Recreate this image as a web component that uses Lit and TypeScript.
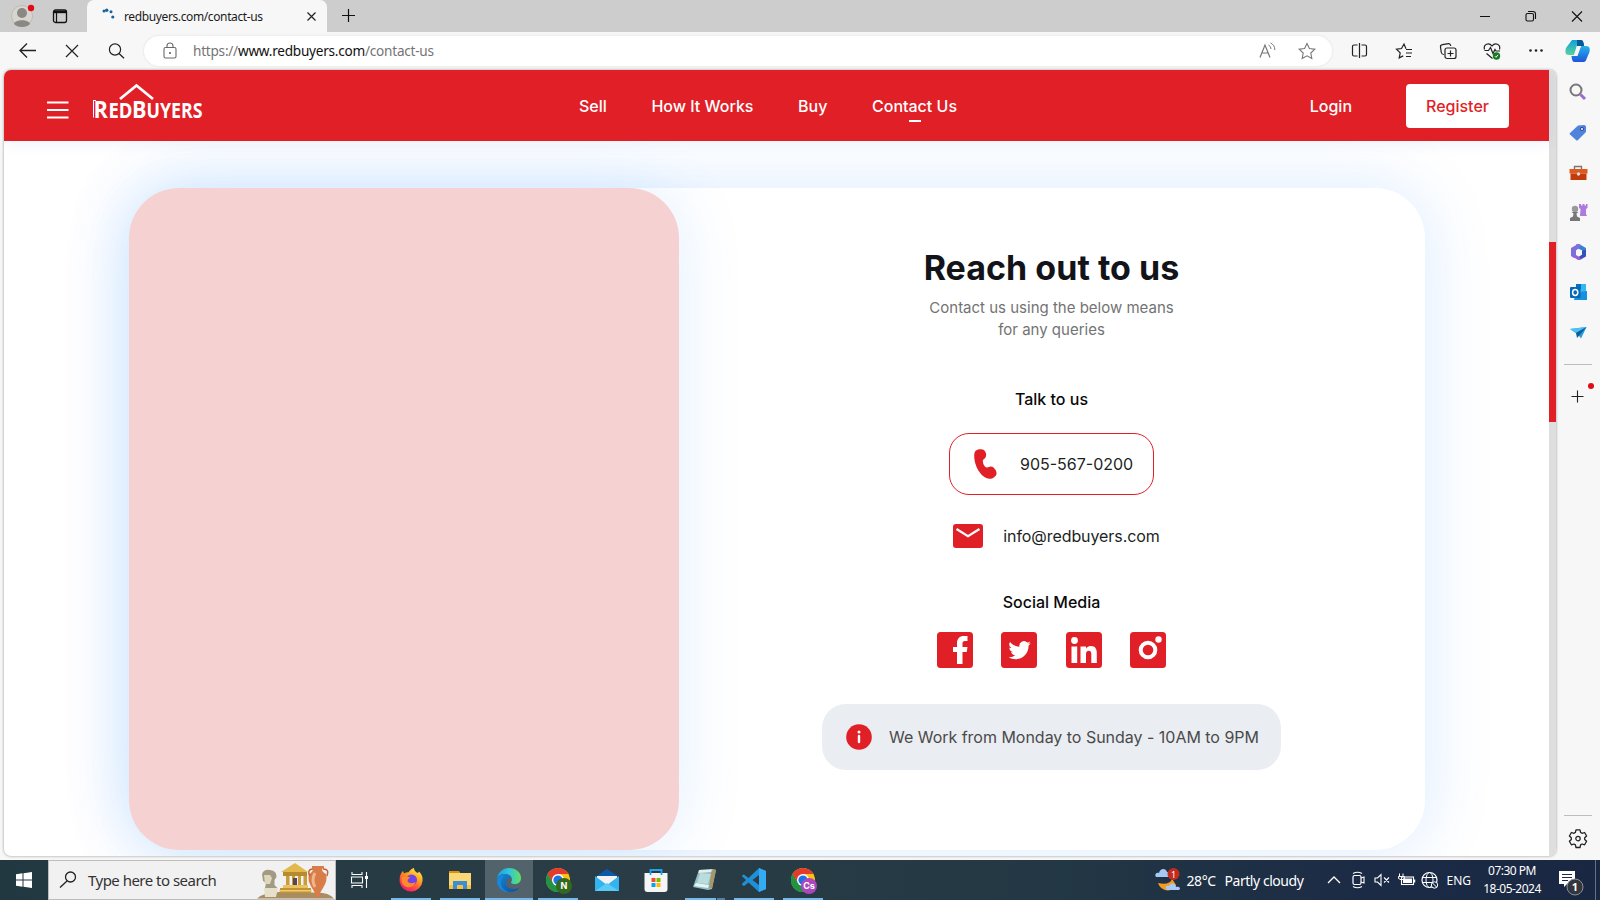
import { LitElement, html, css, svg } from "lit";
import { customElement } from "lit/decorators.js";

const icon = (w: number, h: number, body: unknown) =>
  html`<svg width=${w} height=${h} viewBox="0 0 ${w} ${h}" fill="none">${body}</svg>`;

const magnifier = svg`<circle cx="9" cy="8.500" r="5.600" stroke="#222" stroke-width="1.200"/><path d="M13 12.500l5 4.700" stroke="#222" stroke-width="1.300"/>`;
const chrome = (id: string, color: string) => svg`
  <circle cx="14" cy="14" r="12" fill="#fbc116"/>
  <path d="M14 14L3.6 8A12 12 0 0 1 24.4 8L14 8z" fill="#e33b2e"/>
  <path d="M3.6 8A12 12 0 0 0 14 26L19 17 9 17z" fill="#229342"/>
  <path d="M3.6 8L9 17 14 8z" fill="#e33b2e"/>
  <path d="M3.6 8A12 12 0 0 0 14 26l5.2-9H14L8.8 17z" fill="#229342"/>
  <circle cx="14" cy="14" r="6" fill="#fff"/><circle cx="14" cy="14" r="4.6" fill="#1a73e8"/>
  <circle cx="20" cy="20" r="8" fill=${color}/>
  <text x="20" y="23.2" font-size="9" font-weight="700" fill="#fff" text-anchor="middle" font-family="Inter, sans-serif">${id}</text>`;

const taskIcons: { body: unknown; state: string }[] = [
  { state: "open", body: svg`
    <defs><linearGradient id="ff" x1=".8" y1="0" x2=".2" y2="1"><stop offset="0" stop-color="#fff044"/><stop offset=".4" stop-color="#ff9a1f"/><stop offset=".75" stop-color="#ff3b4e"/><stop offset="1" stop-color="#e0188a"/></linearGradient></defs>
    <path d="M3 10c1-2 1.500-4 3-5l1 2.500c1.500-1 3-1.300 4.500-1.200C13 4 15 2.500 17 2c0 2.500 1.500 4 4 5l1-1.500c3 3 4 6 3.500 9.500A11.500 11.500 0 0 1 2.700 16c-.3-2 0-4 .3-6z" fill="url(#ff)"/>
    <circle cx="14.500" cy="14" r="5.500" fill="#7542e5"/><path d="M5 11c3-1.500 6-1 8.500 1-2 .2-3 1.500-3 3 1 2.500 5 3 8 1-1 4-5 6-9 5-4-1.300-6-6-4.500-10z" fill="#ff8a26"/>` },
  { state: "open", body: svg`
    <path d="M3 5h10l2 3H3z" fill="#d9930d"/><path d="M3 7h22v16H3z" fill="#fbd775"/><path d="M3 19h22v4H3z" fill="#f5c044"/>
    <path d="M7 23v-8h14v8h-4v-4h-6v4z" fill="#3b90d4"/>` },
  { state: "active", body: svg`
    <defs><linearGradient id="ed" x1="0" y1=".3" x2="1" y2=".3"><stop offset="0" stop-color="#1aa0e0"/><stop offset=".5" stop-color="#31c6dc"/><stop offset="1" stop-color="#65e05c"/></linearGradient><linearGradient id="ed2" x1="0" y1="0" x2="1" y2="1"><stop offset="0" stop-color="#1587d8"/><stop offset="1" stop-color="#0c4fa0"/></linearGradient></defs>
    <path d="M2 13C3 6 8 2 14 2c7 0 12 4.500 12 10 0 4-3 6-6 6-2.500 0-4-.8-4-1.600 0-.5 1-1 1-2.600C17 10.500 13.500 8 10 8c-4 0-7 2-8 5z" fill="url(#ed)"/>
    <path d="M2 13c1-3.500 4.500-5 8-5 3 0 5.500 1.500 6.500 3.500C14 11 11 13 11 17c0 4 4 6 8 6 2 0 4-.6 5.500-1.500C22 25 18.500 26 15 26 7 26 1.500 20 2 13z" fill="url(#ed2)"/>
    <path d="M10 9c-3 2-4.500 5-4 9 .6 4 4 7 8 8-7 .5-12-5-12-11 1-4 4-6 8-6z" fill="#1688d8"/>` },
  { state: "open", body: chrome("N", "#33691e") },
  { state: "", body: svg`<path d="M2 11L14 3l12 8v6H2z" fill="#0c59a8"/><path d="M4 10h20v8H4z" fill="#f3f3f3"/><path d="M2 10l12 9 12-9v15H2z" fill="#33b4ee"/><path d="M2 25l12-8 12 8z" fill="#5acbf7"/>` },
  { state: "", body: svg`<path d="M2.500 7h23v16a3 3 0 0 1-3 3h-17a3 3 0 0 1-3-3z" fill="#f5f5f5"/><path d="M8.500 9V4h11v5" stroke="#1fa5e8" stroke-width="1.800"/><path d="M9.500 12h4v4h-4z" fill="#f25022"/><path d="M14.500 12h4v4h-4z" fill="#7fba00"/><path d="M9.500 17h4v4h-4z" fill="#00a4ef"/><path d="M14.500 17h4v4h-4z" fill="#ffb900"/>` },
  { state: "open multi", body: svg`<path d="M8 4l13-1 4 1-4 19-4 1-15-3z" fill="#8fbfc4"/><path d="M8 4l13-.6L20 6 7.500 7z" fill="#e8eee9"/><path d="M20 7l2.500-4L25 4l-4 18-3 .5z" fill="#aa9568"/><path d="M3 20l14 2 1-3-13-2z" fill="#e6f3f2"/><path d="M9 7l11 1-3 10-11-1z" fill="#b9dcdc"/>` },
  { state: "open", body: svg`<path d="M19 2l7 3v18l-7 3L8.500 16.500 4 20l-2-1.300v-1L6 14 2 10.300V9.200L4 8.500l4.500 3.500z" fill="#1f8fd6"/><path d="M19 9v10l-6.500-5z" fill="#2a3c45"/><path d="M19 2l7 3v18l-7 3z" fill="#35a9f2"/>` },
  { state: "open", body: chrome("Cs", "#ab47bc") },
];

const sideIcons = [
  svg`<circle cx="8" cy="8" r="5.500" stroke="#767676" stroke-width="2"/><path d="M12.500 12.500l4.500 4.500" stroke="#9a6bd1" stroke-width="3"/>`,
  svg`<path d="M2 11l8-7.500 6-.5c1 0 2 .8 2 2v5l-8 8c-.7.7-1.300.7-2 0l-6-5.500c-.6-.5-.6-1 0-1.500z" fill="#5083dc"/><circle cx="14" cy="7" r="1.600" fill="#dce8ff" stroke="#254a93"/>`,
  svg`<path d="M6.500 7V4.500h7V7" stroke="#777" stroke-width="1.400"/><path d="M1.500 7h18v4.500h-18z" fill="#e2571e"/><path d="M2.500 11.500h16V18h-16z" fill="#c33b0c"/><circle cx="10.500" cy="12" r="1.700" fill="#ddd"/>`,
  svg`<path d="M11 2h2v1.500h1.500V2h2v1.500H18V2h1.500v4l-1.500 1v5l1 2h-7l.5-7-1.500-1z" fill="#ae7ae0"/><circle cx="7" cy="7" r="3.200" fill="#999"/><path d="M3.500 10h7l-2 1.500.5 3 3 1.500v3H2v-3l3-1.500.5-3z" fill="#777"/>`,
  svg`<path d="M8 2.500L11 2l7 4v8l-3 2V9L8 6z" fill="#3b7fd8"/><path d="M10 2L3 6v8l3 2 2-1V9l3-3 2-3z" fill="#7f6fdc"/><path d="M3 13.500l7 4.500h2l6-3.500V12l-4 1-3 1.500L8 13v2z" fill="#9a5fd6"/><path d="M14 8.500l4-.5v6l-5 3-2-2.500 3-2z" fill="#3452b8"/><path d="M8 8.500l2.500-1.700L14 8.500v4l-3 2-3-2z" fill="#f7f7f7"/>`,
  svg`<path d="M8 2h10v9H8z" fill="#35b8f1"/><path d="M8 2h5v5H8z" fill="#0a6fc0"/><path d="M8 10.500L19 9v9H6z" fill="#1490df"/><rect x="2" y="5" width="10.500" height="11" rx="1" fill="#0668b8"/><ellipse cx="7.200" cy="10.500" rx="2.600" ry="2.900" stroke="#fff" stroke-width="1.500"/>`,
  svg`<path d="M2 7l16.500-2L13 16.500l-3-4z" fill="#1f9fe0"/><path d="M2 7l16.500-2L8 11z" fill="#4ac0f5"/><path d="M8 11l10.500-6L9 16z" fill="#125b97"/>`,
];

@customElement("app-root")
export class AppRoot extends LitElement {
  static styles = css`
    :host { display: flex; flex-direction: column; width: 1600px; height: 900px; overflow: hidden; background: #f7f7f7; font-family: "Noto Sans", "Open Sans", sans-serif; color: #1b1b1b; }
    * { box-sizing: border-box; }
    svg { display: block; flex: none; overflow: visible; }
    .tabs { height: 32px; flex: none; background: #cdcdcd; display: flex; align-items: center; }
    .avatar { margin-left: 11px; }
    .workspaces { margin-left: 16px; }
    .tab { width: 240px; height: 32px; margin-left: 19px; background: #f7f7f7; border-radius: 7px 7px 0 0; display: flex; align-items: center; padding-left: 15px; font-size: 12px; }
    .tab .name { width: 191px; flex: none; padding-left: 8px; white-space: nowrap; letter-spacing: -.38px; }
    .plus { margin-left: 14px; }
    .window { margin-left: auto; display: flex; gap: 26px; padding-right: 13px; }
    .toolbar { height: 38px; flex: none; display: flex; align-items: center; }
    .nav { display: flex; gap: 24px; padding-left: 18px; width: 144px; }
    .address { width: 1188px; height: 30px; background: #fff; border-radius: 15px; box-shadow: 0 0 3px #0000001a; display: flex; align-items: center; padding: 0 15px 0 17px; }
    .url { margin-left: 14px; flex: 1; font-size: 13.6px; color: #757575; letter-spacing: -.24px; white-space: nowrap; padding-bottom: 1px; }
    .url b { color: #111; font-weight: 400; }
    .address .last { margin-left: 20px; }
    .tools { display: flex; gap: 24.2px; padding-left: 17.5px; align-items: center; }
    .copilot { margin-left: 19px; }
    .body { height: 790px; flex: none; display: flex; padding-left: 4px; }
    .page { width: 1552px; height: 786px; display: flex; border-radius: 7px; overflow: hidden; background: #fff; box-shadow: 0 0 3px #0006; }
    .site { width: 1545px; display: flex; flex-direction: column; font-family: Inter, sans-serif; }
    .scroll { width: 7px; background: #dedede; padding-top: 172px; }
    .thumb { height: 180px; background: #e11f27; }
    .header { height: 71px; flex: none; background: #e11f27; color: #fff; display: grid; grid-template-columns: 575px 1fr auto; align-items: center; padding-right: 40px; font-size: 16px; font-weight: 500; z-index: 2; box-shadow: 0 2px 14px #0a50a014; }
    .brand { display: flex; align-items: center; padding-left: 43px; gap: 24px; }
    .burger { padding-top: 9px; }
    .logo { font-family: "Open Sans", "Noto Sans", sans-serif; font-weight: 700; margin-bottom: 11px; }
    .menu { display: flex; gap: 44.600px; }
    .current::after { content: ""; display: block; width: 12px; height: 2px; background: #fff; margin: 4px auto -6px; }
    .auth { display: flex; align-items: center; gap: 54px; }
    .register { width: 103px; height: 44px; border-radius: 4px; background: #fff; color: #e11f27; display: grid; place-items: center; }
    .main { flex: 1; padding: 47px 0 0 125px; }
    .card { width: 1296px; height: 662px; border-radius: 50px; background: #fff; box-shadow: 0 0 68px rgba(0, 123, 255, .15); display: flex; }
    .photo { width: 550px; border-radius: 50px; background: #f5d1d1; box-shadow: 0 0 68px rgba(0, 123, 255, .12); }
    .contact { flex: 1; display: flex; flex-direction: column; align-items: center; padding-right: 1px; }
    h1 { margin: 58px 0 0; font-size: 34px; line-height: 44px; font-weight: 700; color: #121419; white-space: nowrap; letter-spacing: .03px; }
    .lead { margin: 7px 0 0; font-size: 15px; line-height: 22px; color: #737373; text-align: center; }
    .label { font-size: 16px; line-height: 20px; font-weight: 500; color: #0a0a0a; }
    .talk { margin-top: 48px; }
    .phone { margin-top: 24px; width: 205px; height: 62px; border: 1px solid #e11f27; border-radius: 20px; display: flex; align-items: center; padding-left: 23.500px; gap: 23.500px; font-size: 16px; color: #1d1f24; }
    .mail { margin-top: 29px; height: 24px; display: flex; align-items: center; gap: 20px; font-size: 16px; padding-left: 10px; color: #1d1f24; letter-spacing: -.08px; }
    .social { margin-top: 44px; }
    .networks { margin-top: 20px; display: flex; gap: 28.400px; }
    .hours { margin-top: 36px; width: 459px; height: 66px; border-radius: 24px; background: #eaedf2; display: flex; align-items: center; padding-left: 24px; gap: 17px; font-size: 16px; color: #4a4a4a; white-space: nowrap; letter-spacing: -.02px; }
    .side { width: 44px; display: flex; flex-direction: column; align-items: center; padding-top: 12px; }
    .apps { display: flex; flex-direction: column; gap: 20px; }
    .rule { width: 28px; height: 1px; background: #bdbdbd; margin: 22px 0 20px; flex: none; }
    .rule.low { margin: auto 0 12px; }
    .gear { margin-bottom: 12px; }
    .taskbar { height: 40px; flex: none; display: flex; background: linear-gradient(90deg, #223840, #2a3d46 40%, #233844 65%, #1b2b45 85%, #192743); color: #fff; }
    .start { width: 48px; display: grid; place-items: center; }
    .search { width: 288px; background: #f1f1f1; border: 1px solid #bcbcbc; display: flex; align-items: center; padding-left: 10px; color: #333; font-size: 15px; }
    .search span { width: 180px; flex: none; padding-left: 11px; letter-spacing: -.52px; }
    .view { width: 51px; display: grid; place-items: center; padding-right: 4px; }
    .running { display: flex; gap: 1px; }
    .task { width: 48px; display: grid; place-items: center; position: relative; }
    .task.active { background: #53636b; }
    .open::after, .active::after { content: ""; position: absolute; left: 4px; right: 4px; bottom: 0; height: 2px; background: #76b9ed; }
    .active::after { left: 0; right: 0; }
    .multi::after { background: linear-gradient(90deg, #76b9ed 31px, #2a3d46 31px, #2a3d46 32px, #5482a6 32px); }
    .tray { margin-left: auto; display: flex; align-items: center; font-size: 14px; white-space: nowrap; }
    .temp { margin-left: 7px; width: 38px; letter-spacing: -.4px; }
    .sky { width: 99px; letter-spacing: -.45px; }
    .status { display: flex; gap: 4px; }
    .lang { width: 42.500px; padding-left: 7px; font-size: 12px; }
    .clock { width: 60px; font-size: 12px; line-height: 18px; text-align: center; letter-spacing: -.5px; }
    .note { margin-left: 17px; width: 36px; }
    .edge { width: 5px; height: 40px; border-left: 1px solid #64718a; }
  `;

  render() {
    return html`
      <div class="tabs">
        <div class="avatar">${icon(24, 26, svg`<circle cx="11" cy="13" r="10.500" fill="#d8d5d0" stroke="#bebbb5"/><circle cx="11" cy="10" r="5" fill="#8b8883"/><path d="M3 21c1-5 15-5 16 0-3 4-13 4-16 0z" fill="#8b8883"/><circle cx="20" cy="5" r="3.200" fill="#e30b13"/>`)}</div>
        <div class="workspaces">${icon(17, 16, svg`<rect x="2.500" y="2" width="13" height="12.500" rx="2" stroke="#111" stroke-width="1.300"/><path d="M2.500 4h13" stroke="#111" stroke-width="2.400"/><path d="M5.500 4v10" stroke="#111" stroke-width="1.200"/>`)}</div>
        <div class="tab">
          ${icon(14, 14, svg`<circle cx="2" cy="2" r="1.500" fill="#1464a5"/><circle cx="4.700" cy="1.200" r="1.700" fill="#1464a5"/><circle cx="9" cy="2.800" r="1.500" fill="#1464a5"/><circle cx="10.800" cy="8" r="1.600" fill="#1464a5"/>`)}
          <span class="name">redbuyers.com/contact-us</span>
          ${icon(9, 10, svg`<path d="M.5 1.500l8 8M8.500 1.500l-8 8" stroke="#222" stroke-width="1.200"/>`)}
        </div>
        <div class="plus">${icon(16, 16, svg`<path d="M7.500 1v13M1 7.500h13" stroke="#111" stroke-width="1.200"/>`)}</div>
        <div class="window">
          ${icon(20, 20, svg`<path d="M5 10.500h10" stroke="#111"/>`)}
          ${icon(20, 20, svg`<rect x="5" y="7.500" width="7.500" height="7.500" rx="1.500" stroke="#111" stroke-width="1.100"/><path d="M7 5.500h5a2.500 2.500 0 0 1 2.500 2.500v5" stroke="#111" stroke-width="1.100"/>`)}
          ${icon(20, 20, svg`<path d="M5 5.500l10 10M15 5.500l-10 10" stroke="#111" stroke-width="1.100"/>`)}
        </div>
      </div>
      <div class="toolbar">
        <div class="nav">
          ${icon(20, 20, svg`<path d="M18 9.500H2M9 2.500l-7 7 7 7" stroke="#222" stroke-width="1.300"/>`)}
          ${icon(20, 20, svg`<path d="M4 4l12 12M16 4L4 16" stroke="#222" stroke-width="1.200"/>`)}
          ${icon(20, 20, magnifier)}
        </div>
        <div class="address">
          ${icon(18, 18, svg`<rect x="3" y="5.500" width="12" height="10.500" rx="1.500" stroke="#6b6b6b" stroke-width="1.100"/><path d="M6 5.500V4a3 3 0 0 1 6 0v1.500" stroke="#6b6b6b" stroke-width="1.100"/><circle cx="9" cy="11" r="1" fill="#555"/>`)}
          <span class="url">https://<b>www.redbuyers.com</b>/contact-us</span>
          ${icon(20, 20, svg`<path d="M3 16.500L8 4l5 12.500M4.700 12h6.500" stroke="#777" stroke-width="1.200"/><path d="M11.500 4q2.500 1.300 2.500 4M13.500 2q4.500 2 4.300 7" stroke="#777"/>`)}
          <div class="last">${icon(20, 20, svg`<path d="M10 2.500l2.400 5 5.400.7-4 3.800 1 5.400-4.800-2.600-4.800 2.600 1-5.400-4-3.800 5.400-.7z" stroke="#777" stroke-width="1.100"/>`)}</div>
        </div>
        <div class="tools">
          ${icon(20, 20, svg`<path d="M7.500 4H4A1.500 1.500 0 0 0 2.500 5.500v8A1.500 1.500 0 0 0 4 15h3.500M11.500 4H15a1.500 1.500 0 0 1 1.500 1.500v8A1.500 1.500 0 0 1 15 15h-3.500M9.500 2v15" stroke="#222" stroke-width="1.200"/>`)}
          ${icon(20, 20, svg`<path d="M12 7.800L10 3 7.500 7.500l-5 .7 3.700 3.700-1 5 4-2M12 8.500h6M12 12h6M12 15.500h5" stroke="#222" stroke-width="1.200"/>`)}
          ${icon(20, 20, svg`<rect x="7" y="7" width="11" height="10.500" rx="2" stroke="#222" stroke-width="1.200"/><path d="M12.500 9.500v6M9.500 12.500h6M6 13.500c-2 0-2.500-1-2.700-2L2.500 6c-.3-1.500.5-2 2-2.300l6-1c1.500-.2 2 .8 2.300 2.300" stroke="#222" stroke-width="1.200"/>`)}
          ${icon(20, 20, svg`<path d="M2.500 8.500C1 3 7 1 10 5c3-4 9-2 7.500 3.500M2.500 9.500h4l2-3 2.500 6 2-4 1 1.500h4M4.500 12.500l6 5" stroke="#222" stroke-width="1.200"/><circle cx="14.500" cy="15" r="3.700" fill="#187b22"/><path d="M13 15.300l1 1 2-2.500" stroke="#fff"/>`)}
          ${icon(20, 20, svg`<circle cx="4.500" cy="9.500" r="1.300" fill="#222"/><circle cx="10" cy="9.500" r="1.300" fill="#222"/><circle cx="15.500" cy="9.500" r="1.300" fill="#222"/>`)}
        </div>
        <div class="copilot">${icon(26, 26, svg`<defs><linearGradient id="cl" x1="0" y1="0" x2="0" y2="1"><stop offset="0" stop-color="#139fdd"/><stop offset="1" stop-color="#55d49a"/></linearGradient><linearGradient id="cr" x1="0" y1="0" x2="0" y2="1"><stop offset="0" stop-color="#26b3ea"/><stop offset="1" stop-color="#1c56db"/></linearGradient></defs>
          <path d="M7 2h9c2 0 2 2 3 5H12L9 17H4c-4 0-4-3-3-7z" fill="url(#cl)"/><path d="M12 2h4c2 0 3 3 3 6h-7z" fill="#075a97"/><path d="M16 8h5c4 0 4 3 3.500 6l-3 7c-1 3-2 3-4 3h-8c-2 0-2.500-2-3-6h6z" fill="url(#cr)"/><path d="M13 8h3l-4 9.500H9z" fill="#f7f7f7"/>`)}</div>
      </div>
      <div class="body">
        <div class="page">
          <div class="site">
            <div class="header">
              <div class="brand">
                <div class="burger">${icon(22, 18, svg`<path d="M0 1.500h21.500M0 9h21.500M0 16.500h21.500" stroke="#fff" stroke-width="1.900"/>`)}</div>
                <svg class="logo" width="112" height="36" viewBox="0 0 112 36" fill="#fff">
                  <path d="M27 17L43.500 3.500 60 17" fill="none" stroke="#fff" stroke-width="2.800"/>
                  <path d="M.5 18v17.500M0 18.500h3" stroke="#fff" stroke-width="1"/>
                  <text x=".6" y="35.500" font-size="24" textLength="14.400" lengthAdjust="spacingAndGlyphs">R</text>
                  <text x="15.500" y="35.500" font-size="20.500" textLength="24" lengthAdjust="spacingAndGlyphs">ED</text>
                  <text x="39" y="35.500" font-size="24" textLength="14.500" lengthAdjust="spacingAndGlyphs">B</text>
                  <text x="53.500" y="35.500" font-size="20.500" textLength="56" lengthAdjust="spacingAndGlyphs">UYERS</text>
                </svg>
              </div>
              <div class="menu"><span>Sell</span><span>How It Works</span><span>Buy</span><span class="current">Contact Us</span></div>
              <div class="auth"><span>Login</span><span class="register">Register</span></div>
            </div>
            <div class="main">
              <div class="card">
                <div class="photo"></div>
                <div class="contact">
                  <h1>Reach out to us</h1>
                  <p class="lead">Contact us using the below means<br />for any queries</p>
                  <div class="label talk">Talk to us</div>
                  <div class="phone">
                    ${icon(23, 30, svg`<path d="M1.500 2C3 0 8 0 10 1c2 2 3 5 1.500 7.500-1 1.300-2.800 2-2.700 3.500.2 3 1.200 5 3.200 6.300 2 .8 3-.8 5-.7 3 .3 6 4.400 5.500 7.400-.5 2.500-4 5-7 4.800C7 29 0 17 .2 6 .3 4 .7 3 1.500 2z" fill="#e11f27"/>`)}
                    <span>905-567-0200</span>
                  </div>
                  <div class="mail">
                    ${icon(30, 24, svg`<rect width="30" height="24" rx="3" fill="#e11f27"/><path d="M3.500 5L15 12.200 26.500 5" stroke="#fff" stroke-width="2.200"/>`)}
                    <span>info@redbuyers.com</span>
                  </div>
                  <div class="label social">Social Media</div>
                  <div class="networks">
                    ${icon(36, 36, svg`<rect width="36" height="36" rx="3.500" fill="#e11f27"/><path d="M20 32V20h-4v-5h4v-3.500C20 6.500 22.500 4 27 4h3.500v5H28c-2 0-2.500 1-2.500 2.800V15h5l-.8 5h-4.200v12z" fill="#fff"/>`)}
                    ${icon(36, 36, svg`<rect width="36" height="36" rx="3.500" fill="#e11f27"/><path transform="translate(7.500 7) scale(.93)" d="M23.950 4.570a10 10 0 0 1-2.820.770 4.950 4.950 0 0 0 2.160-2.720 9.900 9.900 0 0 1-3.120 1.190 4.920 4.920 0 0 0-8.380 4.480A13.930 13.930 0 0 1 1.640 3.160a4.920 4.920 0 0 0 1.520 6.570 4.900 4.900 0 0 1-2.230-.610v.060a4.920 4.920 0 0 0 3.950 4.830 5 5 0 0 1-2.210.080 4.940 4.940 0 0 0 4.600 3.420A9.870 9.870 0 0 1 0 19.540a13.990 13.990 0 0 0 7.550 2.210c9.050 0 14-7.500 14-13.980l-.020-.640a9.940 9.940 0 0 0 2.420-2.560z" fill="#fff"/>`)}
                    ${icon(36, 36, svg`<rect width="36" height="36" rx="3.500" fill="#e11f27"/><circle cx="8.500" cy="8.500" r="3.400" fill="#fff"/><path d="M5.500 14.500h5.700V31H5.500zM14.500 14.500H20v2.200c1-1.700 2.500-2.700 5-2.700 4.200 0 5.800 2.800 5.800 7v10h-5.500v-9c0-2-.6-3.300-2.500-3.300S20 20 20 22v9h-5.500z" fill="#fff"/>`)}
                    ${icon(36, 36, svg`<rect width="36" height="36" rx="3.500" fill="#e11f27"/><circle cx="18" cy="18" r="7.300" stroke="#fff" stroke-width="4"/><circle cx="28.500" cy="7.500" r="3.200" fill="#fff"/>`)}
                  </div>
                  <div class="hours">
                    ${icon(26, 26, svg`<circle cx="13" cy="13" r="12.800" fill="#e11f27"/><circle cx="13" cy="8" r="1.500" fill="#fff"/><path d="M13 12v6" stroke="#fff" stroke-width="2.400" stroke-linecap="round"/>`)}
                    <span>We Work from Monday to Sunday - 10AM to 9PM</span>
                  </div>
                </div>
              </div>
            </div>
          </div>
          <div class="scroll"><div class="thumb"></div></div>
        </div>
        <div class="side">
          <div class="apps">${sideIcons.map((s) => icon(20, 20, s))}</div>
          <div class="rule"></div>
          ${icon(20, 20, svg`<path d="M9.500 5.500v12M3.500 11.500h12" stroke="#222" stroke-width="1.100"/><circle cx="23" cy="1" r="3" fill="#e30b13"/>`)}
          <div class="rule low"></div>
          <div class="gear">${icon(20, 20, svg`<path d="M8 1.800h4l.6 2.600 1.500.9 2.500-.8 2 3.500-1.900 1.800v1.700l1.900 1.800-2 3.500-2.500-.8-1.500.9-.6 2.600H8l-.6-2.600-1.500-.9-2.500.8-2-3.500 1.900-1.800V9.800L1.400 8l2-3.500 2.500.8 1.500-.9z" stroke="#222" stroke-width="1.300" stroke-linejoin="round"/><circle cx="10" cy="10.600" r="2.200" stroke="#222" stroke-width="1.200"/>`)}</div>
        </div>
      </div>
      <div class="taskbar">
        <div class="start">${icon(16, 16, svg`<path d="M0 2.200L6.500 1.300V7.500H0zM7.500 1.200L16 0v7.500H7.500zM0 8.500h6.500v6.200L0 13.800zM7.500 8.500H16V16l-8.500-1.200z" fill="#fff"/>`)}</div>
        <div class="search">
          ${icon(18, 18, svg`<circle cx="11.500" cy="6" r="5" stroke="#222" stroke-width="1.300"/><path d="M8 10l-7 6.500" stroke="#222" stroke-width="1.300"/>`)}
          <span>Type here to search</span>
          ${icon(78, 36, svg`
            <path d="M0 36.500q10-8 30-6h30q12 0 17 6z" fill="#a98c5f"/>
            <path d="M24 10L38 1l13 9z" fill="#e2b84f"/><path d="M26 10h24v4H26z" fill="#b78a2b"/>
            <path d="M29 14h3.500v10H29zM35 14h3v10h-3zM41 14h3v10h-3zM46.500 14H50v10h-3.500z" fill="#c99b39"/><path d="M36 16h4v7h-4z" fill="#5a4652"/>
            <path d="M26 23h25v3H26z" fill="#e9c264"/><path d="M23 26h31v5H23z" fill="#c2942f"/><path d="M22 28h33v1.500H22z" fill="#edcb77"/>
            <path d="M5 12q2-5 8-4 7 1 6.500 7l-2 3v5l3 3H8l1-5-3-2z" fill="#a39a83"/><path d="M7 13h6l2 3-2 6H8z" fill="#ded6bd"/><path d="M7 26h14l-2 9H8z" fill="#e6dfca"/>
            <path d="M55 4h12v2l-2 1q0 3 4 5 2 6-3 14l-3 5 1 4h-7l1-4-3-5q-5-8-3-14 4-2 4-5l-1-1z" fill="#d87c48"/><path d="M56 7c-5 0-5 4-3 7M66 7c6 0 5 4 4 7" stroke="#c56430" stroke-width="1.500"/><path d="M58 11q-4 7 0 14" stroke="#f2b48b" stroke-width="3"/>`)}
        </div>
        <div class="view">${icon(17, 16, svg`<path d="M1 0v2.500h10V0M1 16v-2.500h10V16M.5 5h11v6H.5zM15.500 0v16" stroke="#fff" stroke-width="1.100"/><path d="M14 4h3v3h-3z" fill="#fff"/>`)}</div>
        <div class="running">${taskIcons.map((t) => html`<div class="task ${t.state}">${icon(28, 28, t.body)}</div>`)}</div>
        <div class="tray">
          ${icon(25, 24, svg`<path d="M14 6c6 4 3 12-11 9 3 9 15 10 18 2z" fill="#f49b24"/><path d="M1 9c-2-3 1-5 3-4 1-5 7-5 8-1 4 0 4 5 1 5z" fill="#a9c9f5"/><path d="M12 22c-3-3 0-5 2-4 2-4 7-3 7 1 4-1 5 2 3 3H13z" fill="#a9c9f5"/><circle cx="18.500" cy="6" r="6" fill="#c42b1c"/><text x="18.500" y="9.500" font-size="9" fill="#fff" text-anchor="middle">1</text>`)}
          <span class="temp">28°C</span><span class="sky">Partly cloudy</span>
          <div class="status">
            ${icon(20, 20, svg`<path d="M4 13l6-6 6 6" stroke="#fff" stroke-width="1.300"/>`)}
            ${icon(20, 20, svg`<rect x="5" y="5.500" width="8" height="9" rx="1.500" stroke="#fff" stroke-width="1.200"/><path d="M13 8l3-1v6l-3-1M5 3.500q4.500-2.500 9 0M5 16.500q4.500 2.500 9 0" stroke="#fff" stroke-width="1.100"/>`)}
            ${icon(20, 20, svg`<path d="M3 8h2.500L9 4.500v11L5.500 12H3zM12 7.500l5 5M17 7.500l-5 5" stroke="#fff" stroke-width="1.100"/>`)}
            ${icon(20, 20, svg`<rect x="5.500" y="7" width="12" height="7.500" stroke="#fff" stroke-width="1.100"/><path d="M7 8.500h9V13H7z" fill="#fff"/><path d="M18.500 9.500v3" stroke="#fff" stroke-width="1.500"/><path d="M3.500 3.500v3M7 3.500v3M2.500 6.500h6v2q-3 3-6 0zM5.500 9v5" stroke="#fff"/>`)}
            ${icon(20, 20, svg`<circle cx="9.500" cy="10" r="7.500" stroke="#fff" stroke-width="1.200"/><ellipse cx="9.500" cy="10" rx="3.500" ry="7.500" stroke="#fff"/><path d="M2 7.500h15M2 12.500h15" stroke="#fff"/><circle cx="14.500" cy="15" r="3.200" fill="#1b2b45" stroke="#fff"/><path d="M12.500 13l4 4" stroke="#fff"/>`)}
          </div>
          <span class="lang">ENG</span>
          <div class="clock">07:30 PM<br />18-05-2024</div>
          <div class="note">${icon(26, 26, svg`<path d="M0 4h16v13H8l-3 3v-3H0z" fill="#fff"/><path d="M3 7.500h10M3 10.500h10M3 13.500h6" stroke="#1b2b45"/><circle cx="16" cy="20" r="8" fill="#33363c" stroke="#8b8f96"/><text x="16" y="24" font-size="11" font-weight="700" fill="#fff" text-anchor="middle">1</text>`)}</div>
          <div class="edge"></div>
        </div>
      </div>
    `;
  }
}
